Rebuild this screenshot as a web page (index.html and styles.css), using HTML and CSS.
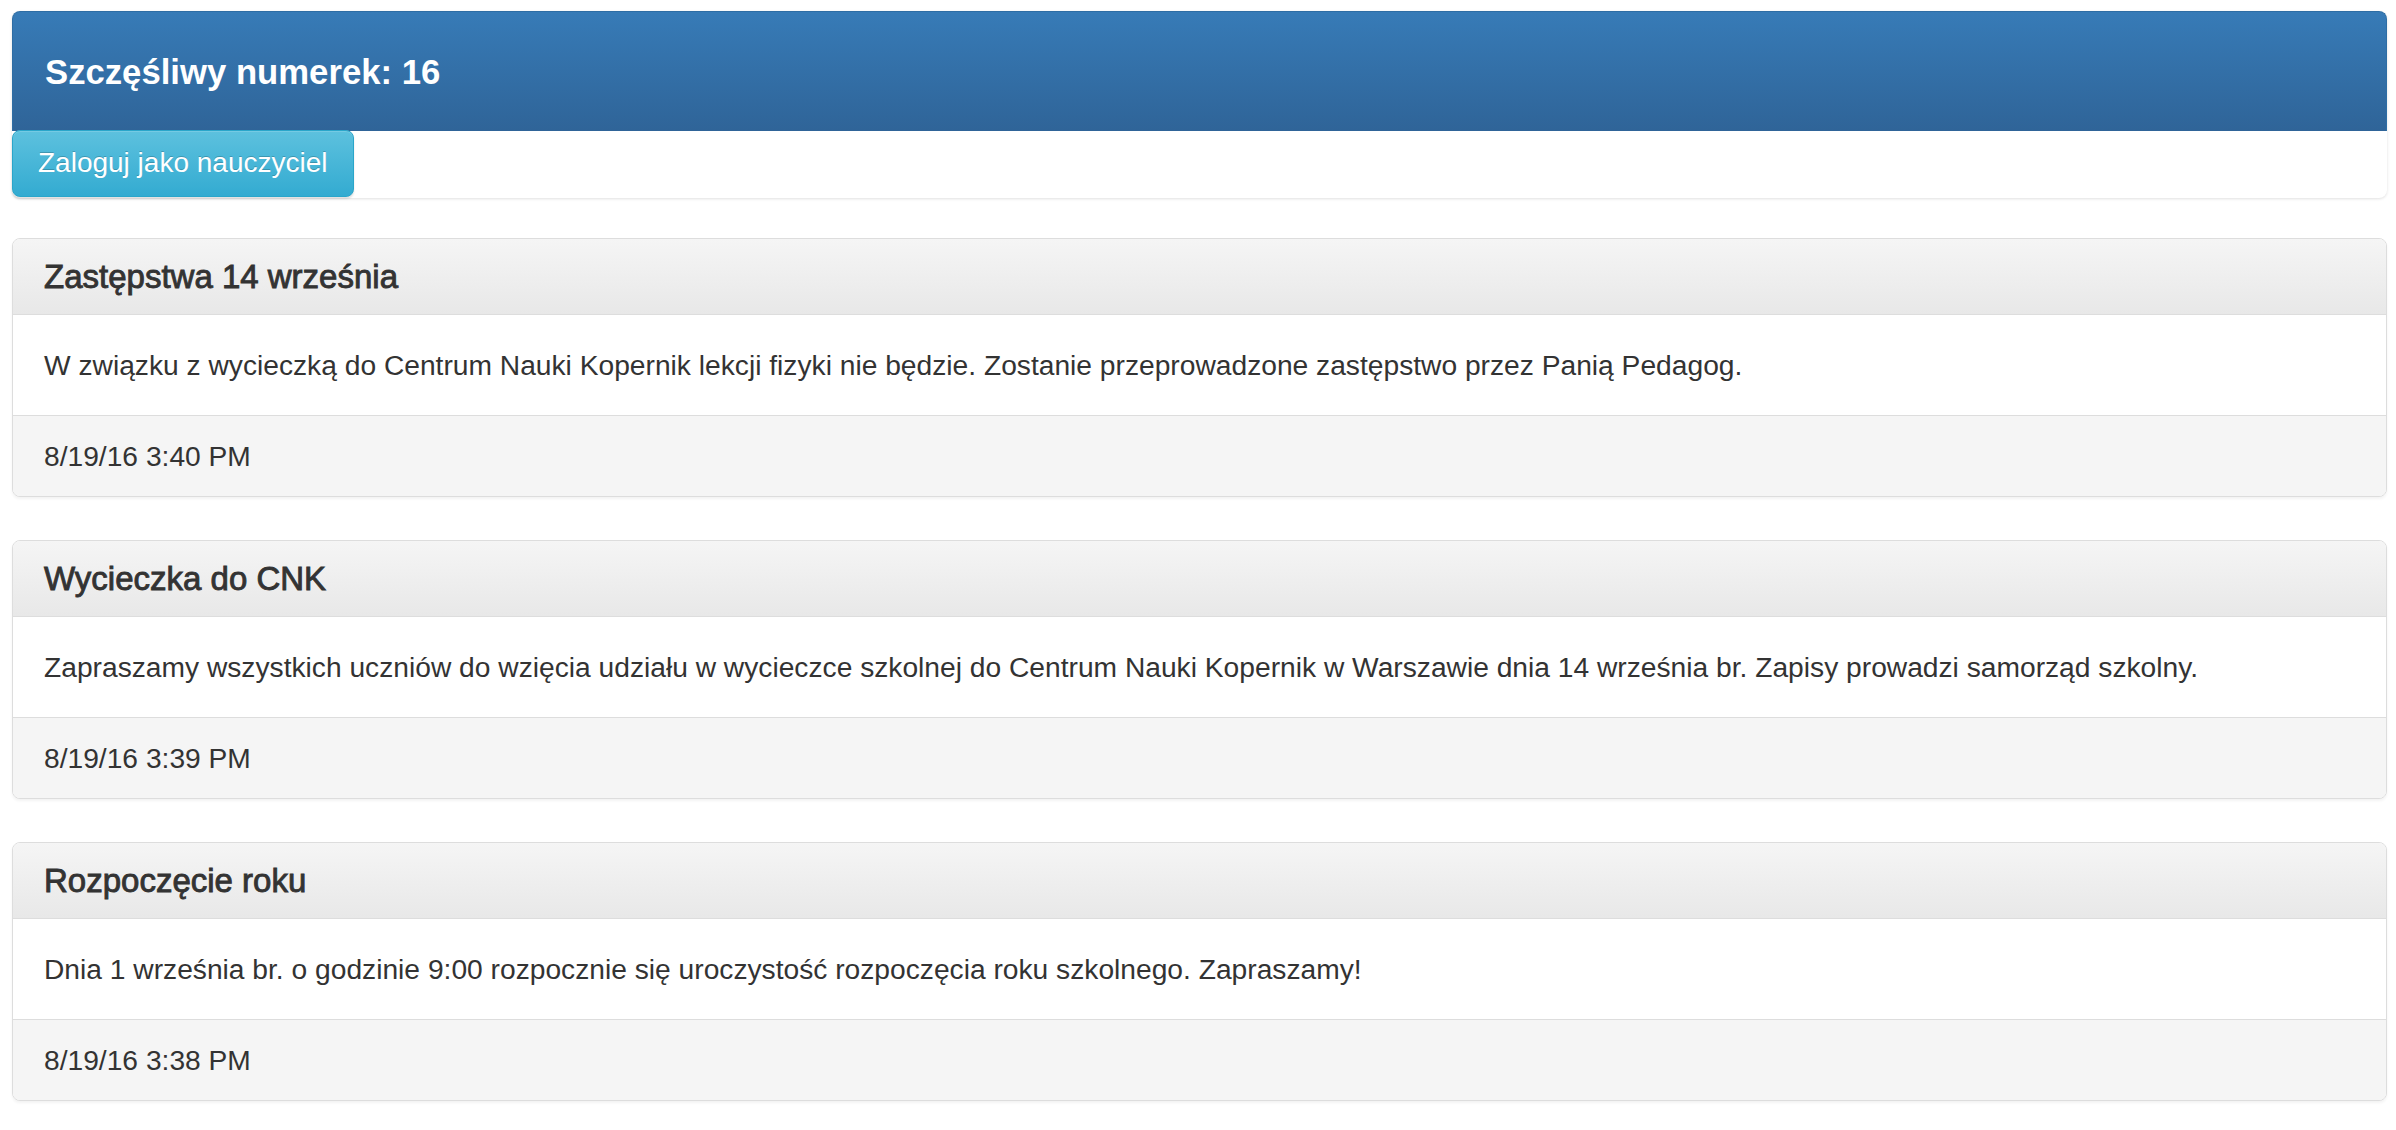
FILE: index.html
```html
<!DOCTYPE html>
<html lang="pl">
<head>
<meta charset="utf-8">
<title>Szczęśliwy numerek</title>
<link rel="stylesheet" href="styles.css">
</head>
<body>
<div class="page">
  <div class="top-box">
    <div class="top-head">
      <h4 class="lucky">Szczęśliwy numerek: 16</h4>
    </div>
    <div class="top-body">
      <button class="btn-info" type="button">Zaloguj jako nauczyciel</button>
    </div>
  </div>

  <div class="panel">
    <div class="panel-heading"><h3 class="panel-title">Zastępstwa 14 września</h3></div>
    <div class="panel-body">W związku z wycieczką do Centrum Nauki Kopernik lekcji fizyki nie będzie. Zostanie przeprowadzone zastępstwo przez Panią Pedagog.</div>
    <div class="panel-footer">8/19/16 3:40 PM</div>
  </div>

  <div class="panel">
    <div class="panel-heading"><h3 class="panel-title">Wycieczka do CNK</h3></div>
    <div class="panel-body">Zapraszamy wszystkich uczniów do wzięcia udziału w wycieczce szkolnej do Centrum Nauki Kopernik w Warszawie dnia 14 września br. Zapisy prowadzi samorząd szkolny.</div>
    <div class="panel-footer">8/19/16 3:39 PM</div>
  </div>

  <div class="panel">
    <div class="panel-heading"><h3 class="panel-title">Rozpoczęcie roku</h3></div>
    <div class="panel-body">Dnia 1 września br. o godzinie 9:00 rozpocznie się uroczystość rozpoczęcia roku szkolnego. Zapraszamy!</div>
    <div class="panel-footer">8/19/16 3:38 PM</div>
  </div>
</div>
</body>
</html>
```

FILE: styles.css
```css
html, body {
  margin: 0;
  padding: 0;
  background: #ffffff;
}

body {
  font-family: "Liberation Sans", Arial, Helvetica, sans-serif;
  font-size: 28.2px;
  color: #333333;
}

.page {
  padding: 11px 9px 0 12px;
}

.top-box {
  border-radius: 8px;
  background: #ffffff;
  box-shadow: 0 1px 3px rgba(0, 0, 0, 0.12);
  margin-bottom: 40px;
}

.top-head {
  height: 120px;
  display: flex;
  align-items: center;
  padding-left: 32px;
  border-radius: 8px 8px 0 0;
  background-image: linear-gradient(to bottom, #377bb7 0%, #2f6498 100%);
  border: 1px solid #2e6da4;
  border-bottom: none;
  box-sizing: border-box;
}

.lucky {
  margin: 0;
  font-size: 34.7px;
  font-weight: bold;
  color: #ffffff;
  line-height: 40px;
}

.top-body {
  display: flex;
  height: 67px;
}

.btn-info {
  font-family: inherit;
  font-size: 28px;
  line-height: 40px;
  padding: 11px 25px 13px;
  color: #ffffff;
  text-shadow: 0 -1px 0 rgba(0, 0, 0, 0.2);
  background-image: linear-gradient(to bottom, #5dc1de 0%, #33abd1 100%);
  border: 1px solid #2aa6ca;
  border-radius: 8px;
  box-shadow: inset 0 1px 0 rgba(255, 255, 255, 0.15), 0 2px 2px rgba(0, 0, 0, 0.12);
  margin: -1px 0 0 0;
  height: 67px;
  box-sizing: border-box;
  cursor: pointer;
}

.panel {
  border: 1px solid #dddddd;
  border-radius: 8px;
  background: #ffffff;
  box-shadow: 0 2px 3px rgba(0, 0, 0, 0.05);
  margin-bottom: 43px;
  overflow: hidden;
}

.panel-heading {
  padding: 20px 31px 19px;
  background-image: linear-gradient(to bottom, #f5f5f5 0%, #e8e8e8 100%);
  border-bottom: 1px solid #dddddd;
}

.panel-title {
  margin: 0;
  font-size: 33px;
  font-weight: normal;
  line-height: 36px;
  color: #333333;
  -webkit-text-stroke: 0.9px #333333;
}

.panel-body {
  padding: 30px 31px;
  line-height: 40px;
}

.panel-footer {
  padding: 20px 31px;
  line-height: 40px;
  background: #f5f5f5;
  border-top: 1px solid #dddddd;
}
```
